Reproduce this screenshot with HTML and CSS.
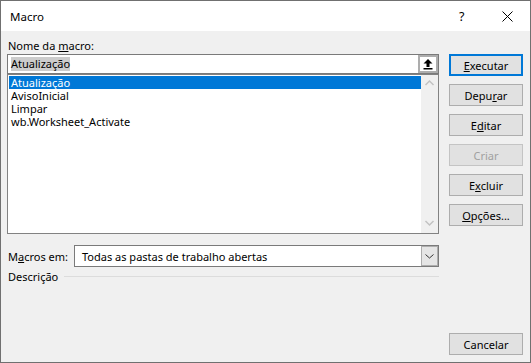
FILE: index.html
```html
<!DOCTYPE html>
<html lang="pt">
<head>
  <meta charset="UTF-8">
  <meta name="viewport" content="width=device-width, initial-scale=1.0">
  <title>Macro</title>
  <link rel="stylesheet" href="styles.css">
</head>
<body>
  <div class="window">
    <div class="titlebar">
      <span class="title">Macro</span>
      <span class="help">?</span>
      <span class="close">
        <svg width="11" height="11" viewBox="0 0 11 11">
          <path d="M0.5 0.5 L10.5 10.5 M10.5 0.5 L0.5 10.5" stroke="#000" stroke-width="1" fill="none"/>
        </svg>
      </span>
    </div>
    <div class="dialog">
      <div class="left">
        <div class="label">Nome da <u>m</u>acro:</div>
        <div class="name-box">
          <span class="name-sel">Atualização</span>
          <span class="pick-btn">
            <svg width="16" height="14" viewBox="0 0 16 14">
              <polygon points="8,2 3.5,6.5 6.5,6.5 6.5,10 9.5,10 9.5,6.5 12.5,6.5" fill="#000"/>
              <rect x="3.5" y="11" width="9" height="1.5" fill="#000"/>
            </svg>
          </span>
        </div>
        <div class="list">
          <ul class="items">
            <li class="selected">Atualização</li>
            <li>AvisoInicial</li>
            <li>Limpar</li>
            <li>wb.Worksheet_Activate</li>
          </ul>
          <div class="scrollbar">
            <svg width="17" height="17" viewBox="0 0 17 17">
              <polyline points="4.5,10 8.5,6 12.5,10" stroke="#c2c2c2" stroke-width="1.5" fill="none"/>
            </svg>
            <svg width="17" height="17" viewBox="0 0 17 17">
              <polyline points="4.5,7 8.5,11 12.5,7" stroke="#c2c2c2" stroke-width="1.5" fill="none"/>
            </svg>
          </div>
        </div>
        <div class="macros-row">
          <span class="row-label">M<u>a</u>cros em:</span>
          <div class="select">
            <span class="select-text">Todas as pastas de trabalho abertas</span>
            <span class="drop-btn">
              <svg width="15" height="18" viewBox="0 0 15 18">
                <polyline points="3.5,7.5 7.5,11 11.5,7.5" stroke="#333" stroke-width="1" fill="none"/>
              </svg>
            </span>
          </div>
        </div>
        <div class="desc-row">
          <span>Descrição</span>
          <span class="rule"></span>
        </div>
      </div>
      <div class="buttons">
        <button class="btn default"><u>E</u>xecutar</button>
        <button class="btn">Depu<u>r</u>ar</button>
        <button class="btn">E<u>d</u>itar</button>
        <button class="btn" disabled>Criar</button>
        <button class="btn">E<u>x</u>cluir</button>
        <button class="btn"><u>O</u>pções...</button>
        <button class="btn cancel">Cancelar</button>
      </div>
    </div>
  </div>
</body>
</html>
```
FILE: styles.css
```css
body {
  margin: 0;
  font-family: "Segoe UI", "Noto Sans", sans-serif;
  font-size: 11px;
  color: #000;
}
.window {
  width: 531px;
  height: 363px;
  box-sizing: border-box;
  border: 1px solid #707070;
  display: flex;
  flex-direction: column;
  background: #f0f0f0;
}
.titlebar {
  height: 30px;
  background: #fff;
  display: flex;
  align-items: center;
  padding-left: 9px;
}
.title {
  flex: 1;
  font-size: 11.5px;
}
.help {
  width: 12px;
  margin-right: 31px;
  font-size: 12.5px;
  padding-left: 1px;
}
.close {
  display: flex;
  margin-right: 17px;
}
.dialog {
  flex: 1;
  display: flex;
  padding: 6px 7px 7px 6px;
}
.left {
  width: 432px;
  display: flex;
  flex-direction: column;
}
.label {
  height: 17px;
  line-height: 17px;
  padding-left: 1px;
}
.name-box {
  height: 20px;
  box-sizing: border-box;
  border: 1px solid #7a7a7a;
  background: #fff;
  display: flex;
  align-items: center;
}
.name-sel {
  margin-left: 3px;
  background: #cccccc;
  line-height: 14px;
}
.pick-btn {
  margin-left: auto;
  width: 20px;
  height: 18px;
  box-sizing: border-box;
  border: 2px solid #adadad;
  background: #fff;
  display: flex;
}
.list {
  height: 160px;
  box-sizing: border-box;
  border: 1px solid #828282;
  background: #fff;
  display: flex;
  padding: 1px 0 0 1px;
}
.items {
  list-style: none;
  margin: 0;
  padding: 0;
  width: 412px;
}
.items li {
  height: 13px;
  line-height: 13px;
  padding-left: 2px;
}
.items li.selected {
  background: #0078d7;
  color: #fff;
}
.scrollbar {
  width: 17px;
  margin-top: -1px;
  background: #f0f0f0;
  display: flex;
  flex-direction: column;
  justify-content: space-between;
  padding-bottom: 2px;
}
.macros-row {
  margin-top: 11px;
  height: 22px;
  display: flex;
  align-items: center;
}
.row-label {
  width: 66px;
  padding-left: 1px;
}
.select {
  flex: 1;
  height: 22px;
  box-sizing: border-box;
  border: 1px solid #7a7a7a;
  background: #fff;
  display: flex;
  align-items: center;
}
.select-text {
  padding-left: 7px;
  flex: 1;
}
.drop-btn {
  width: 17px;
  height: 20px;
  box-sizing: border-box;
  border: 1px solid #adadad;
  background: #e5e5e5;
  display: flex;
}
.desc-row {
  margin-top: 1px;
  height: 17px;
  display: flex;
  align-items: center;
  padding-left: 1px;
}
.rule {
  flex: 1;
  height: 1px;
  background: #dcdcdc;
  margin-left: 6px;
}
.buttons {
  margin-left: 10px;
  width: 74px;
  display: flex;
  flex-direction: column;
  gap: 8px;
  padding-top: 17px;
}
.btn {
  height: 22px;
  box-sizing: border-box;
  border: 1px solid #adadad;
  background: #e1e1e1;
  font-family: inherit;
  font-size: 11px;
  color: #000;
  padding: 0;
}
.btn.default {
  border: 2px solid #0078d7;
}
.btn:disabled {
  color: #a0a0a0;
  border-color: #c4c4c4;
  background: #e1e1e1;
}
.btn.cancel {
  margin-top: auto;
}
```
